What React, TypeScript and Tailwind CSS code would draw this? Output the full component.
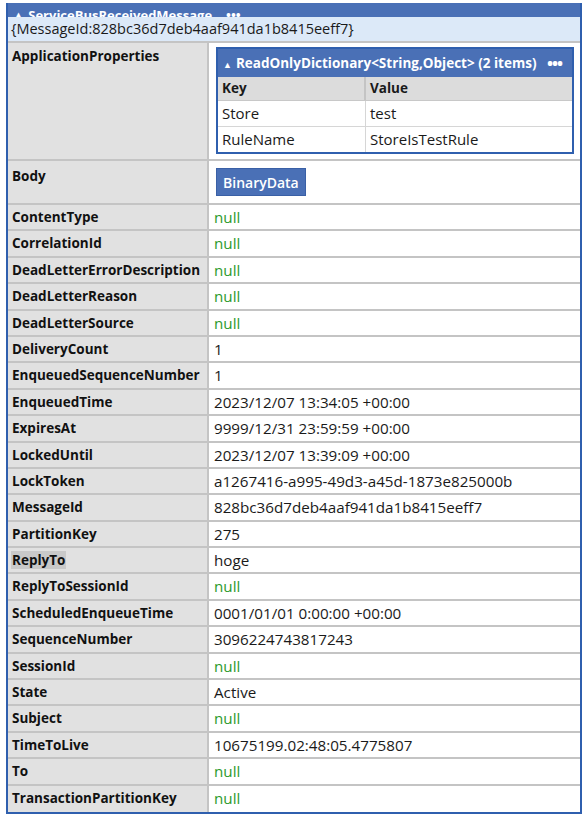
import React from "react"

type Row = { key: string; value: string; isNull?: boolean }

const NULL_ROWS = new Set(["ContentType", "CorrelationId", "DeadLetterErrorDescription", "DeadLetterReason", "DeadLetterSource", "ReplyToSessionId", "SessionId", "Subject", "To", "TransactionPartitionKey"])

const ROWS: Row[] = [
  ["ContentType", "null"],
  ["CorrelationId", "null"],
  ["DeadLetterErrorDescription", "null"],
  ["DeadLetterReason", "null"],
  ["DeadLetterSource", "null"],
  ["DeliveryCount", "1"],
  ["EnqueuedSequenceNumber", "1"],
  ["EnqueuedTime", "2023/12/07 13:34:05 +00:00"],
  ["ExpiresAt", "9999/12/31 23:59:59 +00:00"],
  ["LockedUntil", "2023/12/07 13:39:09 +00:00"],
  ["LockToken", "a1267416-a995-49d3-a45d-1873e825000b"],
  ["MessageId", "828bc36d7deb4aaf941da1b8415eeff7"],
  ["PartitionKey", "275"],
  ["ReplyTo", "hoge"],
  ["ReplyToSessionId", "null"],
  ["ScheduledEnqueueTime", "0001/01/01 0:00:00 +00:00"],
  ["SequenceNumber", "3096224743817243"],
  ["SessionId", "null"],
  ["State", "Active"],
  ["Subject", "null"],
  ["TimeToLive", "10675199.02:48:05.4775807"],
  ["To", "null"],
  ["TransactionPartitionKey", "null"],
].map(([key, value]) => ({ key, value, isNull: NULL_ROWS.has(key) }))

const font = { fontFamily: '"Open Sans", "Noto Sans", sans-serif' }

function Label({ children, highlight, top = "pt-[2px]" }: { children: React.ReactNode; highlight?: boolean; top?: string }) {
  return (
    <div className={`w-[201px] shrink-0 bg-[#e1e1e1] border-r-2 border-[#c4c4c4] px-[4px] ${top} font-bold text-[13.5px] text-[#111]`}>
      <span className={highlight ? "bg-[#c9c9c9] px-[1px] -mx-[1px]" : ""}>{children}</span>
    </div>
  )
}

export default function App() {
  return (
    <div className="w-[586px] h-[819px] bg-white pt-[3px] text-[#1a1a1a]" style={font}>
      <div className="ml-[6px] w-[576px] border-x-2 border-b-2 border-[#2f5fae]">
        {/* title bar, cut off by the screenshot edge */}
        <div className="h-[14px] bg-[#4a70b6] overflow-hidden flex items-end gap-[14px] px-[4px]">
          <span className="text-white font-bold text-[13px] leading-[13px] translate-y-[5px]">▲ ServiceBusReceivedMessage</span>
          <span className="text-white font-bold text-[13px] leading-[13px] translate-y-[5px]">•••</span>
        </div>
        <div className="h-[26px] bg-[#dce9f8] border-b-2 border-[#c4c4c4] px-[3px] flex items-center text-[14.5px]">
          {"{MessageId:828bc36d7deb4aaf941da1b8415eeff7}"}
        </div>

        {/* ApplicationProperties */}
        <div className="flex h-[118px] border-b-2 border-[#c4c4c4]">
          <Label top="pt-[3px]">ApplicationProperties</Label>
          <div className="flex-1 pl-[7px] pt-[4px]">
            <div className="w-[358px] border-2 border-[#2f5fae]">
              <div className="h-[28px] bg-[#4a70b6] text-white font-bold text-[13.5px] flex items-center justify-between pl-[5px] pr-[10px]">
                <span><span className="text-[9px] align-middle mr-[4px]">▲</span>ReadOnlyDictionary&lt;String,Object&gt; (2 items)</span>
                <span className="text-[16px] tracking-[-1px]">•••</span>
              </div>
              <div className="flex h-[24px] bg-[#dcdcdc] font-bold text-[13.5px] border-b border-[#c8c8c8]">
                <div className="w-[148px] border-r-2 border-[#c4c4c4] px-[4px] flex items-center">Key</div>
                <div className="flex-1 px-[4px] flex items-center">Value</div>
              </div>
              <div className="flex h-[26px] border-b border-[#d6d6d6] text-[15px]">
                <div className="w-[148px] border-r border-[#d6d6d6] px-[4px] flex items-center">Store</div>
                <div className="flex-1 px-[4px] flex items-center">test</div>
              </div>
              <div className="flex h-[25px] text-[15px]">
                <div className="w-[148px] border-r border-[#d6d6d6] px-[4px] flex items-center">RuleName</div>
                <div className="flex-1 px-[4px] flex items-center">StoreIsTestRule</div>
              </div>
            </div>
          </div>
        </div>

        {/* Body */}
        <div className="flex h-[44px] border-b-2 border-[#c4c4c4]">
          <Label top="pt-[5px]">Body</Label>
          <div className="flex-1 pl-[7px] pt-[7px]">
            <div className="inline-flex items-center h-[28px] px-[6px] bg-[#4a70b6] border border-[#3a60a6] text-white font-semibold text-[14px]">
              BinaryData
            </div>
          </div>
        </div>

        {ROWS.map((r, i) => (
          <div key={r.key} className={`flex h-[26.4px] ${i < ROWS.length - 1 ? "border-b-2 border-[#c4c4c4]" : ""}`}>
            <Label highlight={r.key === "ReplyTo"}>{r.key}</Label>
            <div className={`flex-1 px-[5px] pt-[1px] text-[15.2px] ${r.isNull ? "text-[#2c9a2c]" : ""}`}>{r.value}</div>
          </div>
        ))}
      </div>
    </div>
  )
}
